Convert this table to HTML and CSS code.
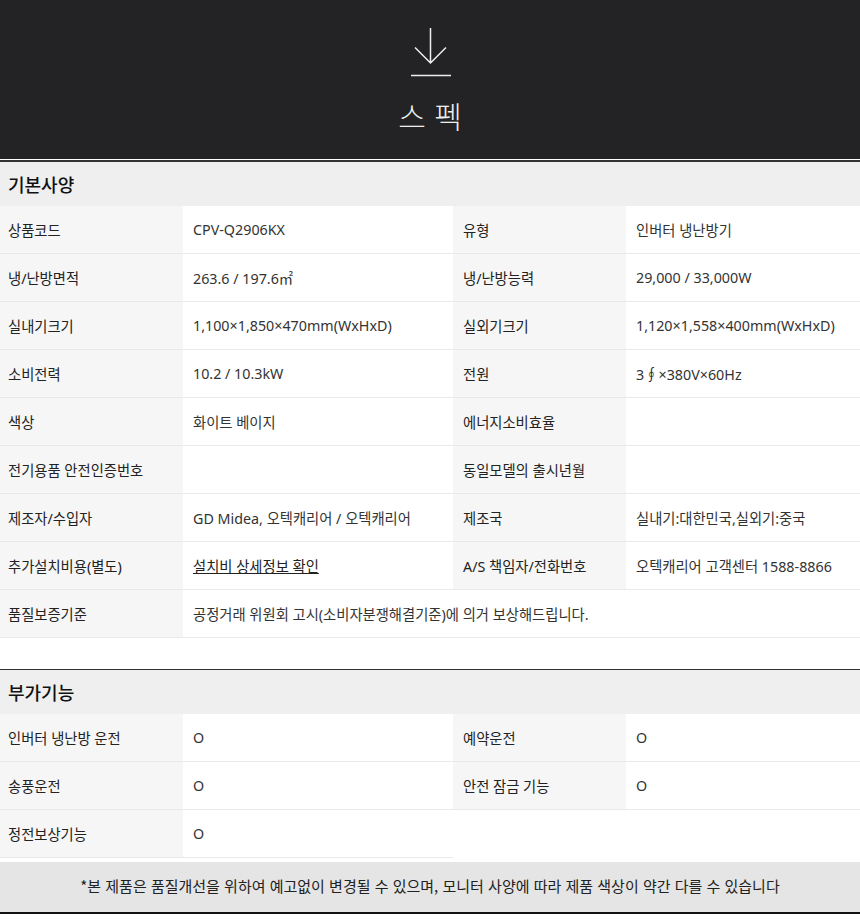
FILE: index.html
```html
<!DOCTYPE html>
<html lang="ko">
<head>
    <meta charset="UTF-8">
    <meta name="viewport" content="width=device-width, initial-scale=1.0">
    <title>스펙</title>
    <link rel="stylesheet" href="styles.css">
</head>
<body>

<div class="spec-head">
    <svg class="down-icon" width="40" height="50" viewBox="0 0 40 50">
        <path d="M19.5 0 V35 M4 19.5 L19.5 35 L35 19.5 M0 47.5 H40" fill="none" stroke="#eee" stroke-width="1.5"/>
    </svg>
    <h1>스 펙</h1>
</div>

<!-- 기본사양 -->
<div class="spec-sec first">
    <h2>기본사양</h2>
    <div class="spec-grid">
        <div class="lbl">상품코드</div><div class="val">CPV-Q2906KX</div>
        <div class="lbl r">유형</div><div class="val">인버터 냉난방기</div>

        <div class="lbl">냉/난방면적</div><div class="val">263.6 / 197.6㎡</div>
        <div class="lbl r">냉/난방능력</div><div class="val">29,000 / 33,000W</div>

        <div class="lbl">실내기크기</div><div class="val">1,100×1,850×470mm(WxHxD)</div>
        <div class="lbl r">실외기크기</div><div class="val">1,120×1,558×400mm(WxHxD)</div>

        <div class="lbl">소비전력</div><div class="val">10.2 / 10.3kW</div>
        <div class="lbl r">전원</div><div class="val">3∮×380V×60Hz</div>

        <div class="lbl">색상</div><div class="val">화이트 베이지</div>
        <div class="lbl r">에너지소비효율</div><div class="val"></div>

        <div class="lbl">전기용품 안전인증번호</div><div class="val"></div>
        <div class="lbl r">동일모델의 출시년월</div><div class="val"></div>

        <div class="lbl">제조자/수입자</div><div class="val">GD Midea, 오텍캐리어 / 오텍캐리어</div>
        <div class="lbl r">제조국</div><div class="val">실내기:대한민국,실외기:중국</div>

        <div class="lbl">추가설치비용(별도)</div><div class="val"><a href="#">설치비 상세정보 확인</a></div>
        <div class="lbl r">A/S 책임자/전화번호</div><div class="val">오텍캐리어 고객센터 1588-8866</div>

        <div class="lbl">품질보증기준</div><div class="val wide">공정거래 위원회 고시(소비자분쟁해결기준)에 의거 보상해드립니다.</div>
    </div>
</div>

<!-- 부가기능 -->
<div class="spec-sec">
    <h2>부가기능</h2>
    <div class="spec-grid">
        <div class="lbl">인버터 냉난방 운전</div><div class="val">O</div>
        <div class="lbl r">예약운전</div><div class="val">O</div>

        <div class="lbl">송풍운전</div><div class="val">O</div>
        <div class="lbl r">안전 잠금 기능</div><div class="val">O</div>

        <div class="lbl">정전보상기능</div><div class="val">O</div>
    </div>
</div>

<p class="notice">*본 제품은 품질개선을 위하여 예고없이 변경될 수 있으며, 모니터 사양에 따라 제품 색상이 약간 다를 수 있습니다</p>

</body>
</html>
```

FILE: styles.css
```css
body {
    margin: 0;
    font-family: "Noto Sans", "Noto Sans CJK KR", sans-serif;
    font-size: 14.3px;
    color: #222;
    background: #fff;
}
.spec-head {
    height: 160px;
    box-sizing: border-box;
    padding-top: 28px;
    background: #232325;
    border-bottom: 1px solid #fff;
    display: flex;
    flex-direction: column;
    align-items: center;
}
.down-icon {
    display: block;
    margin-left: 1px;
}
.spec-head h1 {
    margin: 17px 0 0;
    font-family: "Noto Sans CJK KR", sans-serif;
    font-size: 30px;
    font-weight: 300;
    line-height: 40px;
    color: #eee;
}
.spec-sec {
    margin-top: 31px;
    border-top: 1px solid #333;
}
.spec-sec.first {
    margin-top: 0;
    border-top: 2px solid #333;
}
.spec-sec h2 {
    margin: 0;
    height: 44px;
    line-height: 44px;
    padding-left: 8px;
    background: #efefef;
    font-family: "Noto Sans CJK KR", sans-serif;
    font-size: 18px;
    font-weight: 500;
    color: #111;
}
.spec-grid {
    display: grid;
    grid-template-columns: 183px 270px 173px 1fr;
}
.lbl, .val {
    height: 47px;
    display: flex;
    align-items: center;
    border-bottom: 1px solid #e9e9e9;
    padding: 0 10px;
    white-space: nowrap;
}
.lbl {
    background: #f6f6f6;
    padding-left: 8px;
}
.lbl.r {
    padding-left: 10px;
}
.val {
    background: #fff;
    color: #333;
}
.val.wide {
    grid-column: span 3;
}
.val a {
    color: #222;
    text-decoration: underline;
}
.notice {
    margin: 4px 0 0;
    height: 50px;
    line-height: 48px;
    text-align: center;
    background: #e5e5e5;
    border-bottom: 2px solid #111;
    font-family: "Noto Sans CJK KR", sans-serif;
    font-size: 15px;
    color: #222;
}
```
